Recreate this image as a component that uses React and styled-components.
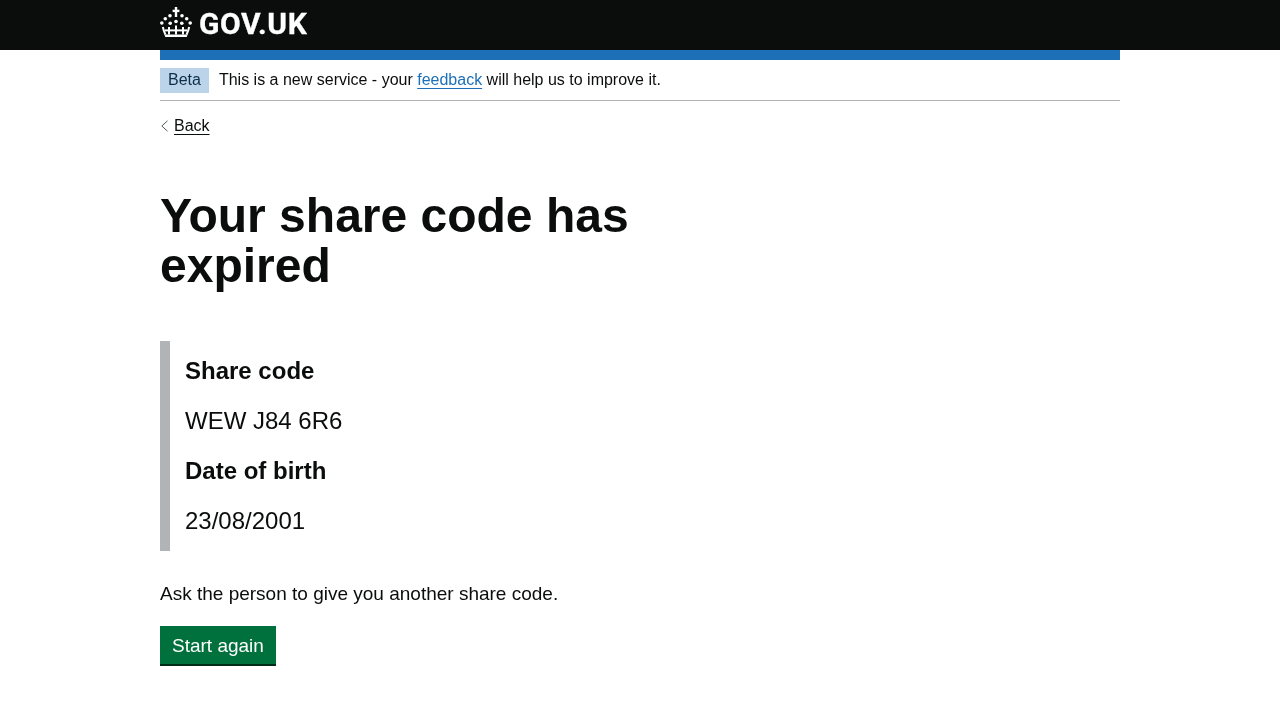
import React from "react";
import styled, { createGlobalStyle } from "styled-components";

const Global = createGlobalStyle`
  html, body { margin: 0; padding: 0; background: #fff; }
  body { font-family: "Liberation Sans", Arial, sans-serif; color: #0b0c0c; }
  #root { will-change: transform; }
`;

const Header = styled.header`
  background: #0b0c0c;
  height: 50px;
`;
const Width = styled.div`
  width: 960px;
  margin: 0 auto;
`;
const Logo = styled.a`
  display: flex;
  align-items: center;
  height: 50px;
  gap: 7px;
  color: #fff;
  text-decoration: none;
`;
const Crown = styled.svg`
  width: 32px;
  height: 30px;
  display: block;
  margin-top: -6px;
`;
const LogoText = styled.span`
  font-family: Roboto, "Liberation Sans", sans-serif;
  font-size: 30px;
  font-weight: 700;
  line-height: 1;
  letter-spacing: 0.6px;
  -webkit-text-stroke: 0.3px #fff;
  margin-top: -2px;
`;
const BlueBar = styled.div`
  height: 10px;
  background: #1d70b8;
`;
const Phase = styled.div`
  display: flex;
  align-items: flex-start;
  box-sizing: border-box;
  padding: 8px 0 7px;
  border-bottom: 1px solid #b1b4b6;
  font-size: 16px;
  line-height: 25px;
`;
const Tag = styled.strong`
  font-weight: 400;
  background: #bbd4ea;
  color: #0c2d4a;
  height: 25px;
  line-height: 24px;
  padding: 0 8px;
  margin-right: 10px;
`;
const Notice = styled.span`
  line-height: 24px;
`;
const FeedbackLink = styled.a`
  color: #1d70b8;
  text-decoration: underline;
  text-underline-offset: 3px;
  text-decoration-thickness: 1px;
`;
const BackRow = styled.div`
  display: flex;
  align-items: center;
  gap: 5px;
  margin-top: 15px;
  height: 20px;
  font-size: 16px;
  line-height: 20px;
`;
const Chevron = styled.svg`
  width: 9px;
  height: 12px;
  display: block;
`;
const BackLink = styled.a`
  color: #0b0c0c;
  text-decoration: underline;
  text-underline-offset: 3px;
  text-decoration-thickness: 1px;
`;
const Title = styled.h1`
  margin: 55px 0 50px;
  max-width: 600px;
  font-size: 48px;
  line-height: 50px;
  font-weight: 700;
`;
const Inset = styled.div`
  border-left: 10px solid #b1b4b6;
  padding: 5px 15px;
  height: 210px;
  box-sizing: border-box;
`;
const Line = styled.p`
  margin: 0;
  font-size: 24px;
  line-height: 50px;
  font-weight: ${(p) => (p.$bold ? 700 : 400)};
`;
const Body = styled.p`
  margin: 30px 0 20px;
  font-size: 19px;
  line-height: 25px;
`;
const Button = styled.button`
  display: block;
  height: 40px;
  box-sizing: border-box;
  border: 0;
  border-bottom: 2px solid #002d18;
  background: #00703c;
  color: #fff;
  font-family: inherit;
  font-size: 19px;
  line-height: 25px;
  padding: 0 12px;
  border-radius: 0;
`;

const dots = [
  [10, 8.7], [22, 8.7], [5.3, 11.8], [26.7, 11.8], [1.8, 16], [30.2, 16],
  [16, 14.5], [10.2, 16.2], [21.8, 16.2],
];

export default function App() {
  return (
    <>
      <Global />
      <Header>
        <Width>
          <Logo href="#">
            <Crown viewBox="0 0 32 30" aria-hidden="true">
              <g fill="#fff">
                <rect x="14.8" y="0" width="2.4" height="10" />
                <rect x="12.6" y="2.7" width="6.8" height="2.4" />
                {dots.map(([cx, cy]) => (
                  <circle key={`${cx}-${cy}`} cx={cx} cy={cy} r="1.8" />
                ))}
                <path d="M4.4 27.4h23.2l-.9 2.6H5.3z" />
              </g>
              <g fill="none" stroke="#fff" strokeWidth="2">
                <path d="M16 18.5v9M9 20v7.5M23 20v7.5" />
                <path d="M2.8 20c.6 2.6 1.4 5 2.6 7.5M29.2 20c-.6 2.6-1.4 5-2.6 7.5" />
                <path d="M5 23.4h22" />
              </g>
            </Crown>
            <LogoText>GOV.UK</LogoText>
          </Logo>
        </Width>
      </Header>
      <Width>
        <BlueBar />
        <Phase>
          <Tag>Beta</Tag>
          <Notice>
            This is a new service - your <FeedbackLink href="#">feedback</FeedbackLink> will help us to improve it.
          </Notice>
        </Phase>
        <BackRow>
          <Chevron viewBox="0 0 9 12" aria-hidden="true">
            <path d="M7.5 .8 1.8 6l5.7 5.2" fill="none" stroke="#505a5f" strokeWidth="1" />
          </Chevron>
          <BackLink href="#">Back</BackLink>
        </BackRow>
        <Title>Your share code has expired</Title>
        <Inset>
          <Line $bold>Share code</Line>
          <Line>WEW J84 6R6</Line>
          <Line $bold>Date of birth</Line>
          <Line>23/08/2001</Line>
        </Inset>
        <Body>Ask the person to give you another share code.</Body>
        <Button>Start again</Button>
      </Width>
    </>
  );
}
